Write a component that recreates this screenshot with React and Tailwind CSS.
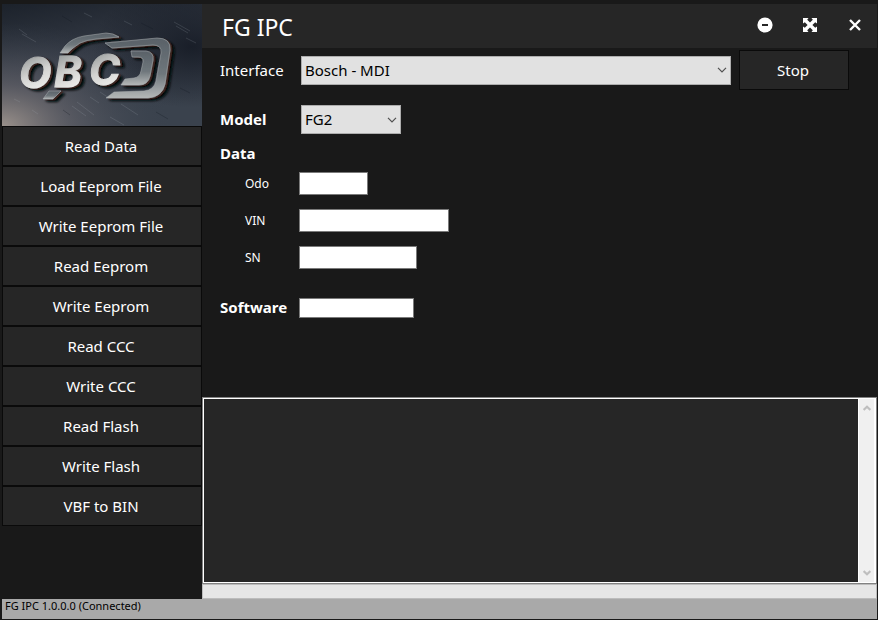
// FG IPC - instrument cluster tool, main window

import { useState } from 'react';

const ACTIONS = [
  'Read Data',
  'Load Eeprom File',
  'Write Eeprom File',
  'Read Eeprom',
  'Write Eeprom',
  'Read CCC',
  'Write CCC',
  'Read Flash',
  'Write Flash',
  'VBF to BIN',
];

const FIELDS = [
  { id: 'odo', label: 'Odo', width: 'w-[69px]' },
  { id: 'vin', label: 'VIN', width: 'w-[150px]' },
  { id: 'sn', label: 'SN', width: 'w-[118px]' },
];

// Brushed metal badge on dark steel
const Logo = () => (
  <svg viewBox="0 0 200 122" className="block w-full" role="img" aria-label="OBCD">
    <defs>
      <linearGradient id="steel" x1="0" y1="0" x2="0.3" y2="1">
        <stop offset="0" stopColor="#1c222b" />
        <stop offset="0.5" stopColor="#343a45" />
        <stop offset="1" stopColor="#3a424d" />
      </linearGradient>
      <radialGradient id="warm" cx="0" cy="1" r="0.85">
        <stop offset="0" stopColor="#9a918b" />
        <stop offset="0.4" stopColor="#64636a" stopOpacity="0.7" />
        <stop offset="1" stopColor="#3a424e" stopOpacity="0" />
      </radialGradient>
      <radialGradient id="shade" cx="0.95" cy="0.35" r="0.5">
        <stop offset="0" stopColor="#161b25" stopOpacity="0.9" />
        <stop offset="1" stopColor="#161b25" stopOpacity="0" />
      </radialGradient>
      <linearGradient id="chrome" x1="0" y1="0" x2="0.3" y2="1">
        <stop offset="0.2" stopColor="#969a9a" />
        <stop offset="0.6" stopColor="#d2d2d0" />
        <stop offset="1" stopColor="#f0f0ee" />
      </linearGradient>
      <linearGradient id="dull" x1="0" y1="0" x2="0" y2="1">
        <stop offset="0" stopColor="#596168" />
        <stop offset="0.6" stopColor="#6f777c" />
        <stop offset="1" stopColor="#b4b7b7" />
      </linearGradient>
      <filter id="relief" x="-10%" y="-10%" width="130%" height="130%">
        <feDropShadow dx="2" dy="0.8" stdDeviation="0.3" floodColor="#3d2822" />
        <feDropShadow dx="2.5" dy="2" stdDeviation="1.3" floodColor="#05080d" />
      </filter>
    </defs>
    <rect width="200" height="122" fill="url(#steel)" />
    <rect width="200" height="122" fill="url(#shade)" />
    <rect width="200" height="122" fill="url(#warm)" />

    {/* scratches */}
    <path
      d="M17 25 L25 31 M20 30 L34 38 M82 9 L90 13 M172 18 L188 27 M174 22 L186 29 M184 34 L194 39 M119 100 L136 111 M98 88 L110 96 M88 93 L97 99 M108 113 L122 121 M70 102 L84 112 M75 98 L92 111 M30 106 L36 110 M12 95 L18 98 M122 17 L130 21"
      stroke="#aab2bb"
      strokeWidth="0.6"
      opacity="0.3"
    />
    <path
      d="M60 12 L70 18 M139 19 L151 25 M178 84 L188 89 M61 106 L68 111 M154 108 L166 115"
      stroke="#10161e"
      strokeWidth="0.8"
      opacity="0.35"
    />

    <g filter="url(#relief)">
      <g fill="url(#dull)" stroke="#aeb3b5" strokeWidth="0.5">
        <path d="M58 49 L63 42 Q70 34 82 32 L104 29 Q111 29 117 33 L94 35 Q84 36 78 39 Q70 44 66 49 Z" />
        <path d="M103 39 L155 34 Q169 34 168 46 L163 80 Q160 93 146 94 L104 94 L112 88 L142 87 Q152 86 154 77 L159 49 Q160 41 151 41 L110 44 Z" />
        <path d="M129 47 L144 47 Q152 48 151 56 L148 72 Q146 81 137 81 L119 81 L123 75 L132 74 Q138 73 139 67 L141 58 Q142 53 136 53 L130 53 Z" />
        <path d="M47 87 L59 87 L51 95 L41 95 Z" />
      </g>
      <g
        fontFamily="Inter, 'Liberation Sans', sans-serif"
        fontSize="42"
        fontWeight="700"
        fontStyle="italic"
        fill="url(#chrome)"
        stroke="url(#chrome)"
        strokeWidth="1"
      >
        <text x="17" y="84">O</text>
        <text x="52" y="83">B</text>
        <text x="87" y="81">C</text>
      </g>
    </g>
  </svg>
);

const Chevron = () => (
  <svg
    viewBox="0 0 10 6"
    className="pointer-events-none absolute top-1/2 right-1 h-[6px] w-[10px] -translate-y-1/2"
    fill="none"
    stroke="#505050"
    strokeWidth="1.2"
  >
    <path d="M1 0.8 L5 4.8 L9 0.8" />
  </svg>
);

const Dropdown = ({ id, options, className }) => (
  <div className={`relative h-[29px] ${className}`}>
    <select
      id={id}
      className="block h-full w-full appearance-none border border-[#adadad] bg-[#e1e1e1] pr-5 pl-[3px] text-[15px] text-black outline-none"
    >
      {options.map(option => (
        <option key={option}>{option}</option>
      ))}
    </select>
    <Chevron />
  </div>
);

const TitleBar = () => (
  <header className="flex h-11 items-center justify-between bg-[#262626] pr-3 pl-5">
    <h1 className="pt-[2px] text-[23px] leading-8 font-normal">FG IPC</h1>
    <div className="flex gap-[25px] pb-[2px]">
      <button type="button" aria-label="Minimize" className="flex size-5 items-center justify-center">
        <svg viewBox="0 0 16 16" className="size-4">
          <circle cx="8" cy="8" r="7.6" fill="#fff" />
          <rect x="5" y="7" width="6" height="2" fill="#262626" />
        </svg>
      </button>
      <button type="button" aria-label="Maximize" className="flex size-5 items-center justify-center">
        <svg viewBox="0 0 14 14" className="size-[14px]" fill="#fff">
          <path d="M0 0 H5.5 L4.2 1.8 L7 4.6 L9.8 1.8 L8.5 0 H14 V5.5 L12.2 4.2 L9.4 7 L12.2 9.8 L14 8.5 V14 H8.5 L9.8 12.2 L7 9.4 L4.2 12.2 L5.5 14 H0 V8.5 L1.8 9.8 L4.6 7 L1.8 4.2 L0 5.5 Z" />
        </svg>
      </button>
      <button type="button" aria-label="Close" className="flex size-5 items-center justify-center">
        <svg viewBox="0 0 12 12" className="size-3" stroke="#fff" strokeWidth="2.4">
          <path d="M1 1 L11 11 M11 1 L1 11" />
        </svg>
      </button>
    </div>
  </header>
);

const ScrollArrow = ({ label, d }) => (
  <button type="button" aria-label={label} className="flex h-[18px] w-full items-center justify-center">
    <svg viewBox="0 0 8 6" className="h-[6px] w-2" fill="none" stroke="#bfbfbf" strokeWidth="2.2">
      <path d={d} />
    </svg>
  </button>
);

export default function App() {
  const [values, setValues] = useState({ odo: '', vin: '', sn: '', software: '' });

  const update = e => setValues(prev => ({ ...prev, [e.target.id]: e.target.value }));

  return (
    <div className="flex min-h-screen flex-col bg-[#191919] pt-1 pr-px pb-px pl-[2px] font-['Noto_Sans','Open_Sans',sans-serif] text-[15px] text-white">
      <div className="flex flex-1">
        <nav className="w-[200px] shrink-0">
          <Logo />
          {ACTIONS.map(action => (
            <button
              key={action}
              type="button"
              className="block h-10 w-full border border-[#0a0a0a] bg-[#262626] pr-[2px] hover:bg-[#303030]"
            >
              {action}
            </button>
          ))}
        </nav>

        <main className="flex min-w-0 flex-1 flex-col">
          <TitleBar />

          <form className="pt-[2px] pr-7 pb-[79px] pl-[18px]" onSubmit={e => e.preventDefault()}>
            <div className="flex h-10 items-center">
              <label htmlFor="interface" className="w-[81px] shrink-0">Interface</label>
              <Dropdown id="interface" options={['Bosch - MDI']} className="flex-1" />
              <button
                type="submit"
                className="ml-2 h-10 w-[110px] border border-[#0a0a0a] bg-[#262626] pr-[2px] hover:bg-[#303030]"
              >
                Stop
              </button>
            </div>

            <div className="mt-[15px] flex items-center">
              <label htmlFor="model" className="w-[81px] shrink-0 font-bold">Model</label>
              <Dropdown id="model" options={['FG2']} className="w-[100px]" />
            </div>

            <h2 className="my-[7px] leading-6 font-bold">Data</h2>

            <div className="flex flex-col gap-[14px]">
              {FIELDS.map(({ id, label, width }) => (
                <div key={id} className="flex h-[23px] items-center">
                  <label htmlFor={id} className="w-[79px] shrink-0 pl-[25px] text-[12px]">{label}</label>
                  <input
                    id={id}
                    type="text"
                    value={values[id]}
                    onChange={update}
                    className={`h-full border border-[#7a7a7a] bg-white px-1 text-[12px] text-black outline-none ${width}`}
                  />
                </div>
              ))}
            </div>

            <div className="mt-[29px] flex h-5 items-center">
              <label htmlFor="software" className="w-[79px] shrink-0 pb-[2px] font-bold">Software</label>
              <input
                id="software"
                type="text"
                value={values.software}
                onChange={update}
                className="h-full w-[115px] border border-[#7a7a7a] bg-white px-1 text-[12px] text-black outline-none"
              />
            </div>
          </form>

          {/* Log output */}
          <div className="flex flex-1 border border-[#828282]">
            <div className="flex flex-1 border border-white">
              <textarea
                aria-label="Log"
                readOnly
                className="block min-w-0 flex-1 resize-none bg-[#262626] p-1 text-[12px] outline-none"
              />
              <div className="flex w-[17px] flex-col justify-between border-x border-white bg-[#f0f0f0]">
                <ScrollArrow label="Scroll up" d="M0.6 5 L4 1.8 L7.4 5" />
                <ScrollArrow label="Scroll down" d="M0.6 1 L4 4.2 L7.4 1" />
              </div>
            </div>
          </div>

          <div
            role="progressbar"
            aria-label="Progress"
            aria-valuenow={0}
            className="h-[15px] border border-[#bcbcbc] bg-[#e6e6e6]"
          />
        </main>
      </div>

      <footer className="h-5 bg-[#a9a9a9] px-[3px] text-[11px] leading-[14px] text-black">
        FG IPC 1.0.0.0 (Connected)
      </footer>
    </div>
  );
}
